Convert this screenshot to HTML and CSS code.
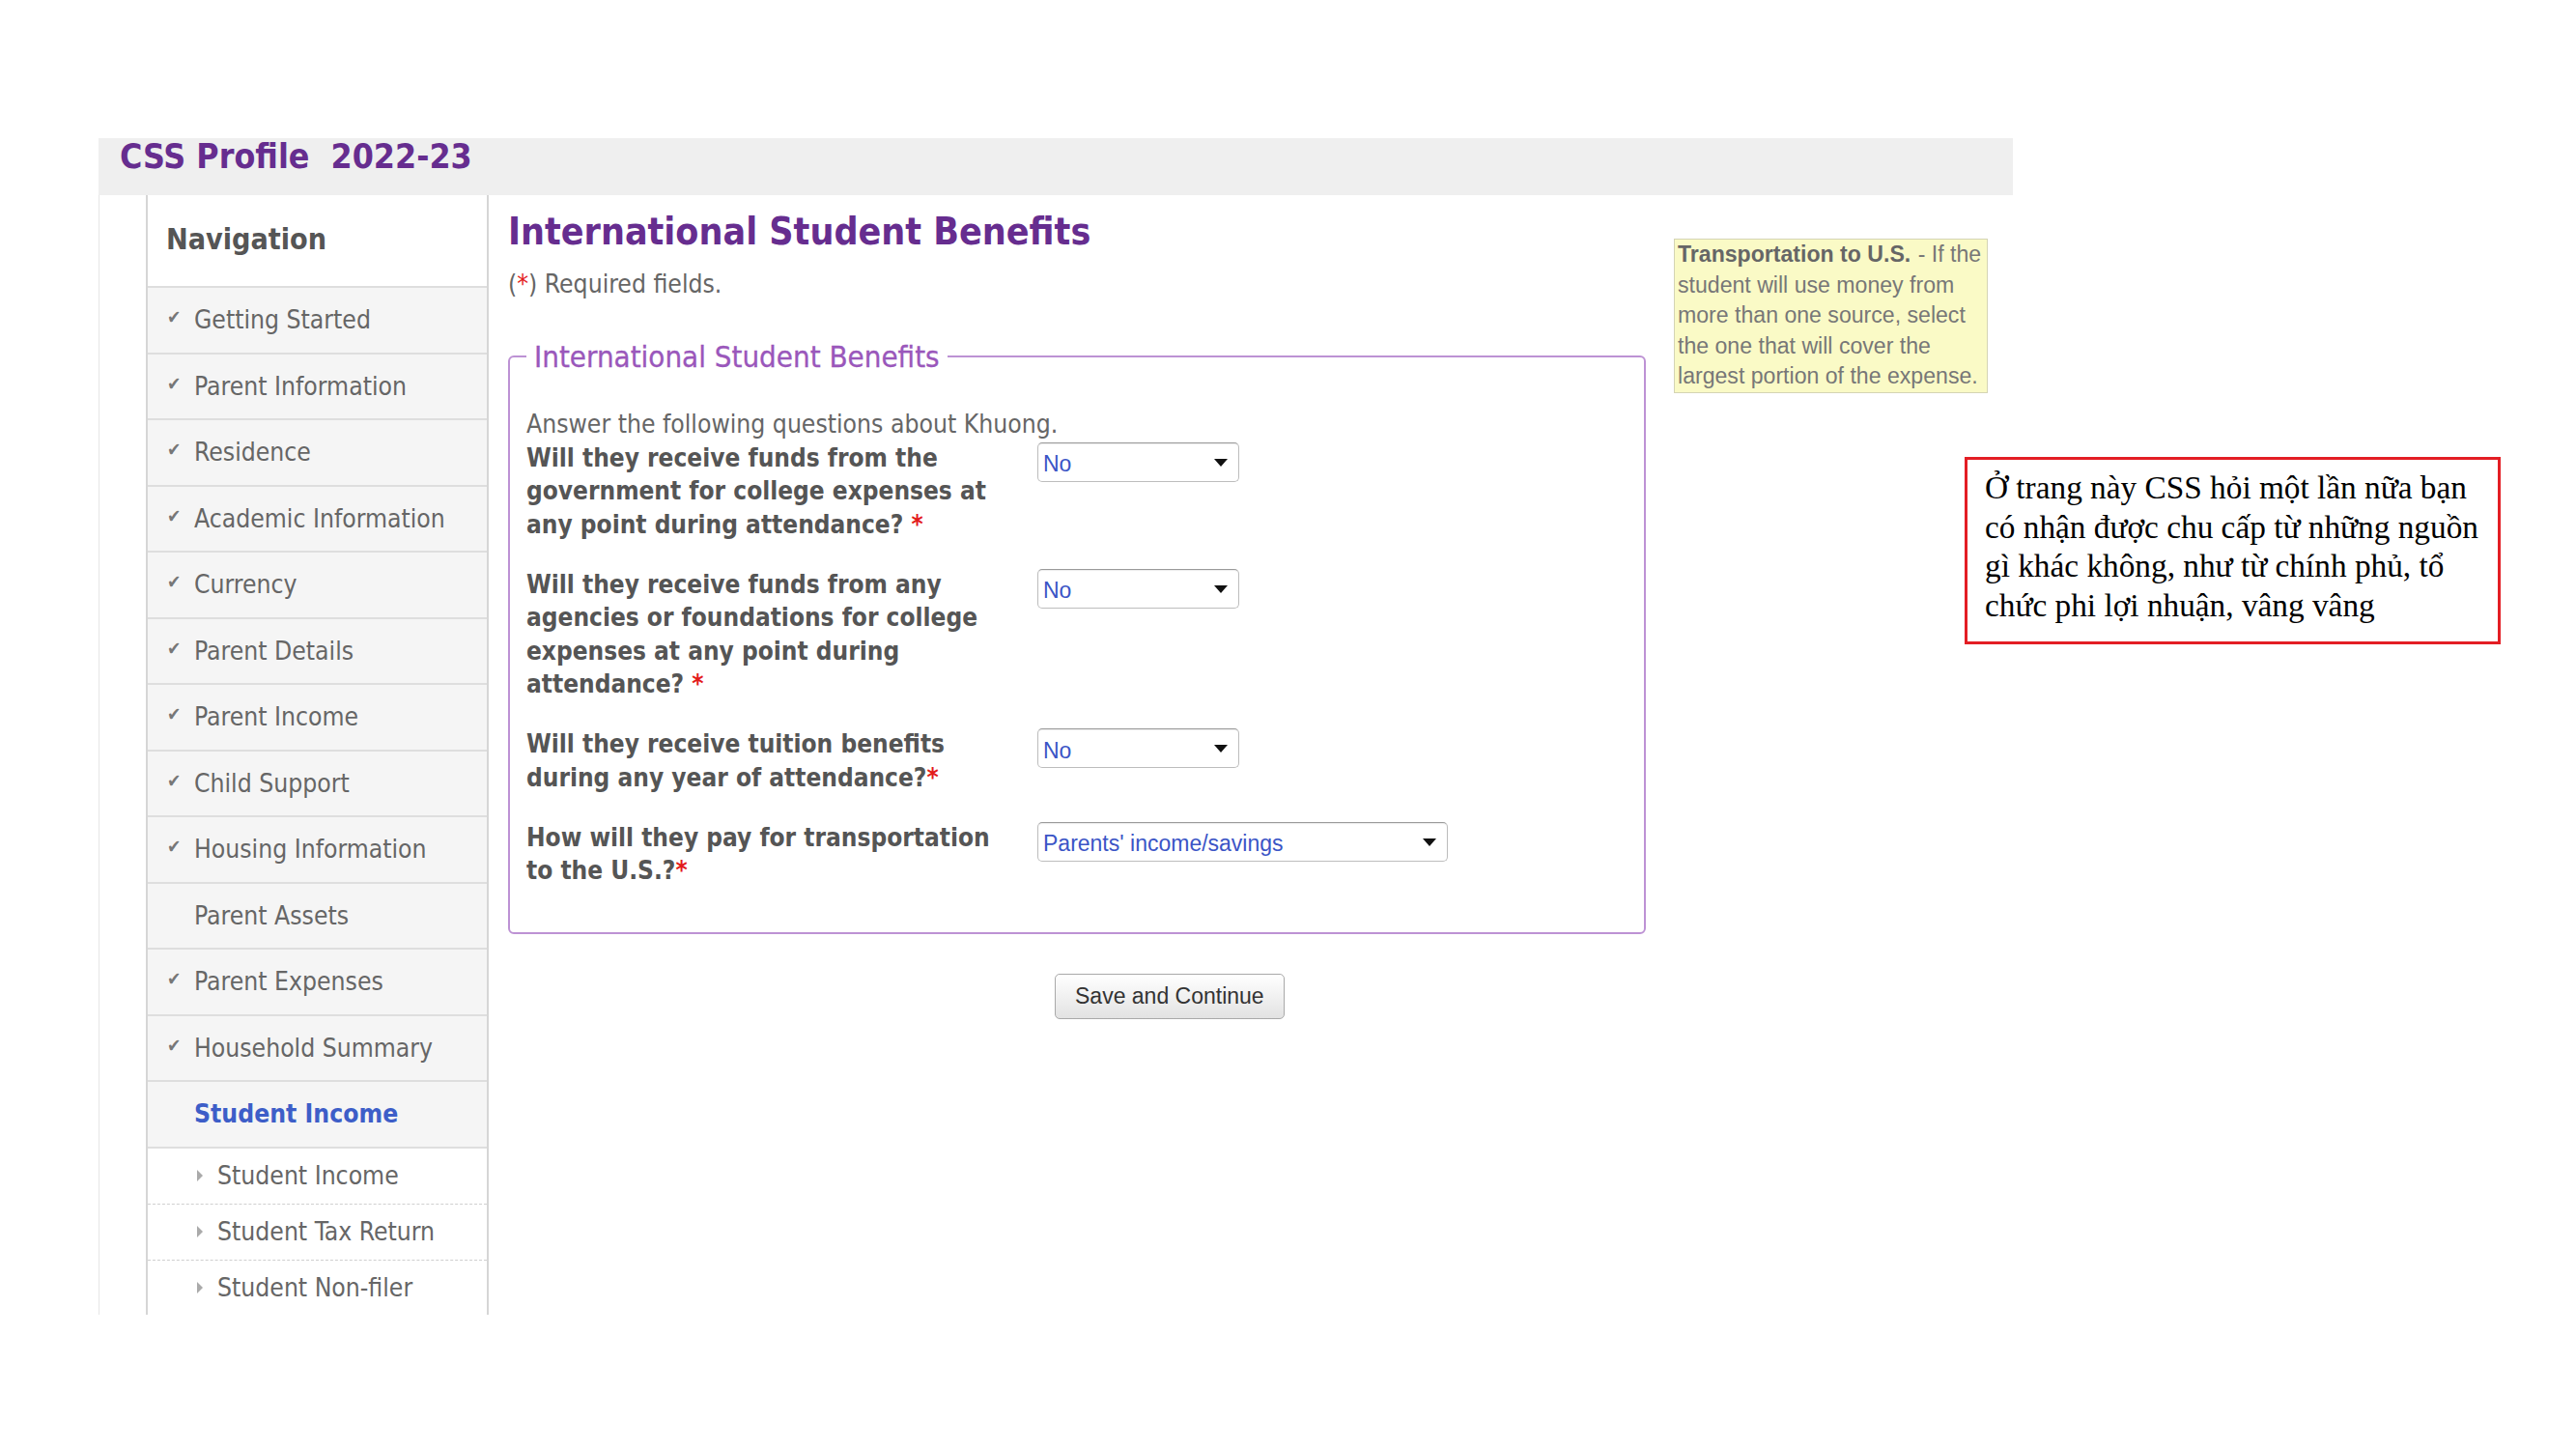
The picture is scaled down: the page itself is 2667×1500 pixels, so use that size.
FILE: index.html
```html
<!DOCTYPE html>
<html lang="en">
<head>
    <meta charset="UTF-8">
    <title>CSS Profile 2022-23</title>
    <link rel="stylesheet" href="styles.css">
</head>
<body>
    <div class="profile">
        <div class="top-bar">CSS Profile&nbsp; 2022-23</div>

        <div class="layout">
            <div class="nav">
                <div class="nav-title">Navigation</div>
                <ul class="nav-list">
                    <li class="done">Getting Started</li>
                    <li class="done">Parent Information</li>
                    <li class="done">Residence</li>
                    <li class="done">Academic Information</li>
                    <li class="done">Currency</li>
                    <li class="done">Parent Details</li>
                    <li class="done">Parent Income</li>
                    <li class="done">Child Support</li>
                    <li class="done">Housing Information</li>
                    <li>Parent Assets</li>
                    <li class="done">Parent Expenses</li>
                    <li class="done">Household Summary</li>
                    <li class="active">Student Income</li>
                </ul>
                <ul class="sub-list">
                    <li>Student Income</li>
                    <li>Student Tax Return</li>
                    <li>Student Non-filer</li>
                </ul>
            </div>

            <div class="main">
                <div class="content">
                    <h1>International Student Benefits</h1>
                    <p class="required-note">(<span class="req">*</span>) Required fields.</p>

                    <fieldset class="benefits">
                        <legend>International Student Benefits</legend>
                        <p class="intro">Answer the following questions about Khuong.</p>

                        <div class="question">
                            <label for="govFunds" class="required">Will they receive funds from the government for college expenses at any point during attendance? </label>
                            <div class="select">
                                <select id="govFunds"><option>No</option><option>Yes</option></select>
                            </div>
                        </div>
                        <div class="question">
                            <label for="agencyFunds" class="required">Will they receive funds from any agencies or foundations for college expenses at any point during attendance? </label>
                            <div class="select">
                                <select id="agencyFunds"><option>No</option><option>Yes</option></select>
                            </div>
                        </div>
                        <div class="question">
                            <label for="tuition" class="required">Will they receive tuition benefits during any year of attendance?</label>
                            <div class="select">
                                <select id="tuition"><option>No</option><option>Yes</option></select>
                            </div>
                        </div>
                        <div class="question">
                            <label for="transport" class="required">How will they pay for transportation to the U.S.?</label>
                            <div class="select wide">
                                <select id="transport"><option>Parents' income/savings</option><option>Student's income/savings</option><option>Other</option></select>
                            </div>
                        </div>
                    </fieldset>

                    <div class="actions">
                        <button type="button" class="save-btn">Save and Continue</button>
                    </div>
                </div>

                <div class="help-tip">
                    <b>Transportation to U.S.</b> - If the student will use money from more than one source, select the one that will cover the largest portion of the expense.
                </div>
            </div>
        </div>
    </div>

    <div class="note">Ở trang này CSS hỏi một lần nữa bạn có nhận được chu cấp từ những nguồn gì khác không, như từ chính phủ, tổ chức phi lợi nhuận, vâng vâng</div>
</body>
</html>
```

FILE: styles.css
```css
* {
    margin: 0;
    padding: 0;
    box-sizing: border-box;
}

body {
    font-family: 'DejaVu Sans Condensed', 'DejaVu Sans', sans-serif;
    font-stretch: condensed;
    background: #fff;
    color: #666;
    position: relative;
    min-height: 1500px;
}

.profile {
    margin: 143px 0 0 102px;
    width: 1982px;
}

.top-bar {
    height: 59px;
    background: #efefef;
    padding: 0 22px;
    color: #662d8f;
    font-size: 35.4px;
    font-weight: bold;
    line-height: 38px;
}

.layout {
    display: flex;
    align-items: flex-start;
    border-left: 1px solid #e6e6e6;
    padding-left: 48px;
}

/* left navigation */
.nav {
    width: 355px;
    flex-shrink: 0;
    border-left: 2px solid #d6d6d6;
    border-right: 2px solid #d6d6d6;
}

.nav-title {
    height: 94px;
    padding: 29px 0 0 19px;
    font-size: 30.2px;
    font-weight: bold;
    line-height: 34px;
    color: #555;
}

.nav-list, .sub-list {
    list-style: none;
}

.nav-list li {
    height: 68.5px;
    display: flex;
    align-items: center;
    padding-left: 48px;
    background: #f5f5f5;
    border-top: 2px solid #dedede;
    font-size: 26.3px;
    color: #666;
}

.nav-list li.done {
    padding-left: 20px;
}

.nav-list li.done::before {
    content: '\2714';
    width: 28px;
    font-size: 19px;
    color: #777;
    margin-top: -6px;
}

.nav-list li.active {
    color: #3d5ec8;
    font-weight: bold;
}

.sub-list {
    border-top: 2px solid #dedede;
}

.sub-list li {
    height: 58px;
    display: flex;
    align-items: center;
    padding-left: 51px;
    font-size: 26.3px;
    color: #666;
    border-bottom: 1px dashed #cfcfcf;
}

.sub-list li:last-child {
    border-bottom: none;
    height: 56px;
}

.sub-list li::before {
    content: '';
    border-left: 6px solid #aaa;
    border-top: 6px solid transparent;
    border-bottom: 6px solid transparent;
    margin-right: 15px;
}

/* main area */
.main {
    display: flex;
    align-items: flex-start;
    padding-left: 20px;
}

.content {
    width: 1178px;
}

h1 {
    padding-top: 17px;
    font-size: 39px;
    line-height: 42px;
    color: #662d8f;
}

.required-note {
    margin-top: 16px;
    font-size: 26.3px;
    line-height: 34px;
    color: #666;
}

.req {
    color: #e31b1b;
}

.benefits {
    margin-top: 41px;
    border: 2px solid #bd92d4;
    border-radius: 6px;
    padding: 36px 17px 46px 17px;
}

.benefits legend {
    padding: 0 8px;
    font-size: 31px;
    line-height: 34px;
    color: #9a57bb;
    -webkit-text-stroke: 0.3px #9a57bb;
}

.intro {
    font-size: 26.3px;
    line-height: 34.5px;
    color: #666;
}

.question {
    display: flex;
    align-items: flex-start;
    margin-bottom: 27.5px;
}

.question:last-child {
    margin-bottom: 0;
}

.question label {
    width: 505px;
    margin-right: 24px;
    font-size: 26px;
    font-weight: bold;
    line-height: 34.5px;
    color: #555;
}

.question label.required::after {
    content: '*';
    color: #e31b1b;
}

.select {
    position: relative;
    width: 209px;
    margin-top: 1px;
}

.select.wide {
    width: 425px;
}

.select select {
    appearance: none;
    -webkit-appearance: none;
    width: 100%;
    height: 41px;
    padding: 4px 30px 0 5px;
    background: #fff;
    border: 1px solid #bdbdbd;
    border-top-color: #9a9a9a;
    border-radius: 5px;
    box-shadow: inset 0 1px 1px rgba(0, 0, 0, 0.08);
    font-family: 'Liberation Sans', Arial, sans-serif;
    font-stretch: normal;
    font-size: 23px;
    color: #3b55c6;
    outline: none;
}

.select::after {
    content: '';
    position: absolute;
    right: 12px;
    top: 17px;
    border-left: 7px solid transparent;
    border-right: 7px solid transparent;
    border-top: 8px solid #111;
    pointer-events: none;
}

.actions {
    margin-top: 41px;
    padding-left: 566px;
}

.save-btn {
    height: 47px;
    padding: 0 20px;
    background: linear-gradient(#ffffff 0%, #f1f1f1 50%, #e2e2e2 100%);
    border: 1px solid #a9a9a9;
    border-radius: 5px;
    font-family: 'Liberation Sans', Arial, sans-serif;
    font-stretch: normal;
    font-size: 23px;
    color: #333;
    cursor: pointer;
}

/* yellow help box on the right */
.help-tip {
    width: 325px;
    margin: 45px 0 0 29px;
    padding: 0 0 0 3px;
    background: #fafac6;
    border: 1px solid #d4d4b4;
    font-family: 'Liberation Sans', Arial, sans-serif;
    font-stretch: normal;
    font-size: 23.1px;
    line-height: 31.5px;
    color: #777;
}

.help-tip b {
    color: #666;
    margin-right: 1px;
}

/* annotation box laid over the screenshot */
.note {
    position: absolute;
    left: 2034px;
    top: 473px;
    width: 555px;
    height: 194px;
    padding: 9px 14px 0 18px;
    border: 3px solid #e31e24;
    font-family: 'Liberation Serif', 'Times New Roman', serif;
    font-stretch: normal;
    font-size: 33.3px;
    line-height: 40.5px;
    color: #000;
}
```
